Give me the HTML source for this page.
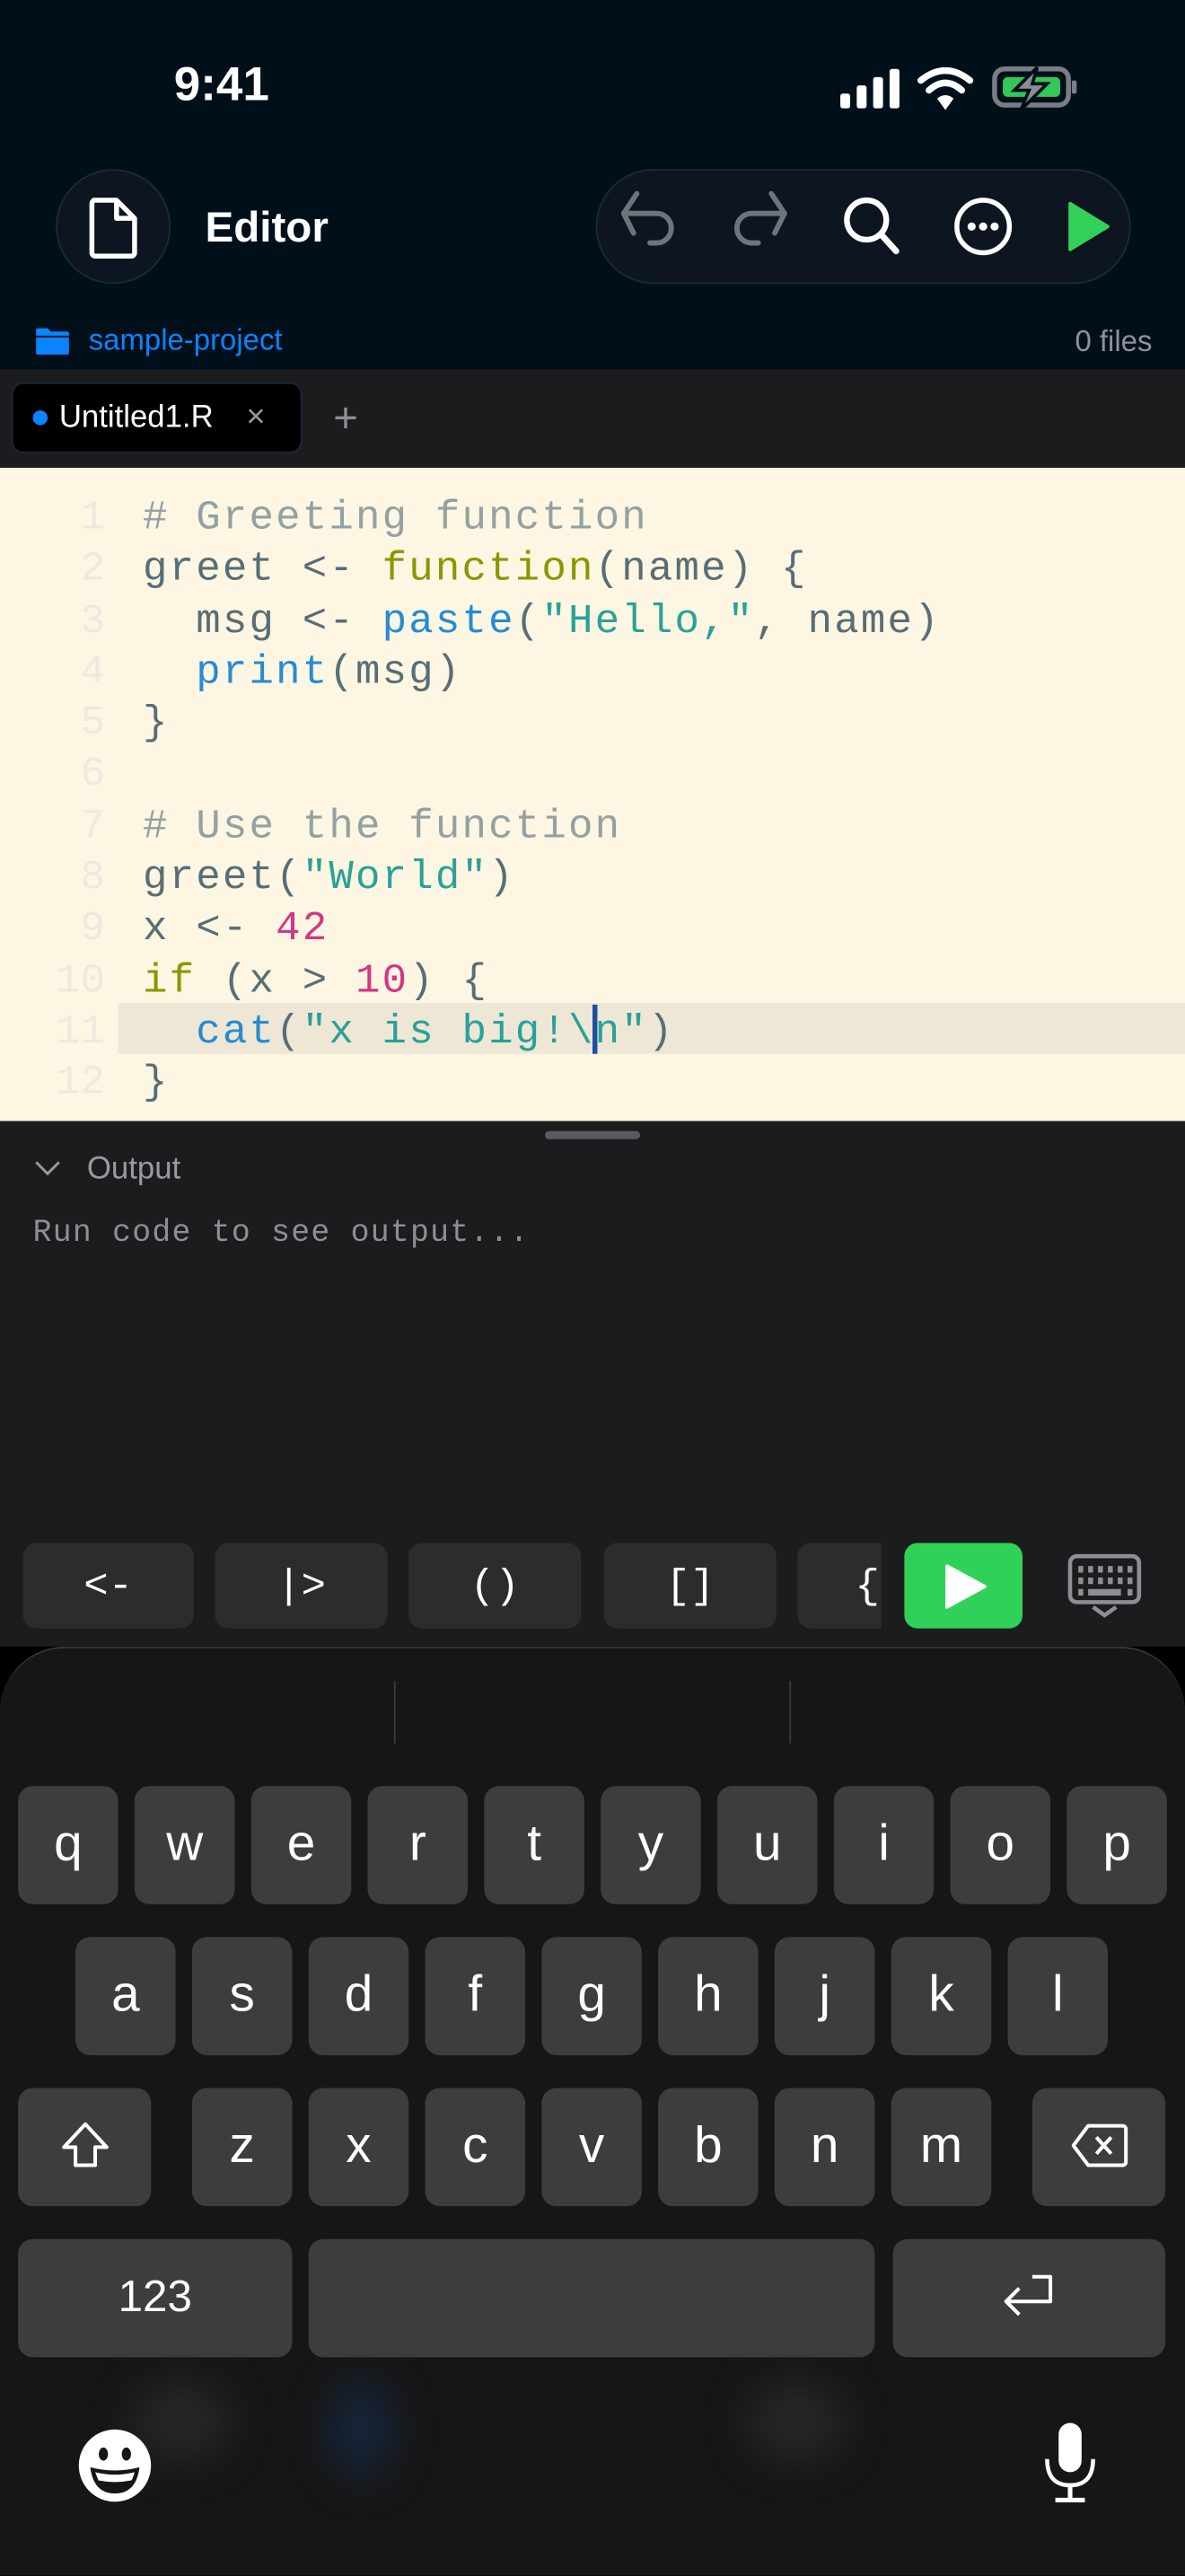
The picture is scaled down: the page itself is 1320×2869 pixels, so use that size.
<!DOCTYPE html>
<html><head><meta charset="utf-8"><style>
*{margin:0;padding:0;box-sizing:border-box}
html,body{width:1320px;height:2868px;overflow:hidden;background:#000}
#r{position:absolute;left:0;top:0;width:722px;height:1569px;transform:scale(1.82825);transform-origin:0 0;font-family:"Liberation Sans",sans-serif;overflow:hidden}
.a{position:absolute}
.code{font-family:"Liberation Mono",monospace;font-size:25px;letter-spacing:1.2px;line-height:31.3px;white-space:pre}
.ln{color:#eee9de;text-align:right;width:64px;left:0;letter-spacing:0}
.c{color:#93a1a1}.d{color:#586e75}.k{color:#859900}.b{color:#268bd2}.s{color:#2aa198}.n{color:#d33682}
.key{position:absolute;background:#3d3d3d;border-radius:9px;color:#fff;font-size:31px;display:flex;align-items:center;justify-content:center;height:72px;width:61px;padding-bottom:2px}
.acc{position:absolute;top:940px;height:52px;background:#2c2c2e;border-radius:8px;color:#fff;font-family:"Liberation Mono",monospace;font-size:25px;display:flex;align-items:center;justify-content:center}
</style></head><body><div id="r">
<!-- header -->
<div class="a" style="left:0;top:0;width:722px;height:225px;background:#00101b"></div>
<div class="a" style="left:106px;top:36px;color:#fff;font-size:29px;font-weight:bold">9:41</div>
<svg class="a" style="left:510px;top:40px" width="150" height="28" viewBox="0 0 150 28">
<rect x="2" y="17" width="6" height="9" rx="1.5" fill="#fff"/><rect x="12" y="12" width="6" height="14" rx="1.5" fill="#fff"/><rect x="22" y="7" width="6" height="19" rx="1.5" fill="#fff"/><rect x="32" y="2" width="6" height="24" rx="1.5" fill="#fff"/>
<path d="M51 9 Q66 -3 81 9" stroke="#fff" stroke-width="4" fill="none" stroke-linecap="round"/><path d="M56 15 Q66 6 76 15" stroke="#fff" stroke-width="4" fill="none" stroke-linecap="round"/><path d="M61 20 L66 27 L71 20 Q66 16 61 20Z" fill="#fff"/>
<rect x="96" y="2" width="45" height="22" rx="6" fill="none" stroke="#7a7e84" stroke-width="3"/><rect x="101" y="7" width="35" height="12" rx="3" fill="#34c759"/><rect x="143" y="9" width="3" height="8" rx="1" fill="#7a7e84"/>
<path d="M122 1 L108 15 L117 15 L112 27 L128 11 L119 11 Z" fill="#8a8e94" stroke="#00101b" stroke-width="2"/>
</svg>
<div class="a" style="left:34px;top:103px;width:70px;height:70px;border-radius:50%;background:#0d1620;border:1px solid #1c2a38"></div>
<svg class="a" style="left:53px;top:120px" width="32" height="38" viewBox="0 0 32 38"><path d="M4 2 H18 L29 13 V34 a2 2 0 0 1 -2 2 H5 a2 2 0 0 1 -2 -2 V4 a2 2 0 0 1 2 -2Z M18 2 V13 H29" fill="none" stroke="#fff" stroke-width="3" stroke-linejoin="round"/></svg>
<div class="a" style="left:125px;top:123px;color:#fff;font-size:26px;font-weight:bold">Editor</div>
<div class="a" style="left:363px;top:103px;width:326px;height:70px;border-radius:35px;background:#0d1620;border:1px solid #1c2a38"></div>
<svg class="a" style="left:370px;top:112px" width="310" height="52" viewBox="0 0 310 52">
<path d="M16 6 L8 18 L14 30 M9 18 H28 a9 9 0 0 1 0 18 H24" fill="none" stroke="#6e747a" stroke-width="3.2" stroke-linecap="round" stroke-linejoin="round" transform="translate(2,0)"/>
<path d="M100 6 L108 18 L102 30 M107 18 H88 a9 9 0 0 0 0 18 H92" fill="none" stroke="#6e747a" stroke-width="3.2" stroke-linecap="round" stroke-linejoin="round"/>
<circle cx="158" cy="22" r="12" fill="none" stroke="#fff" stroke-width="3.5"/><path d="M167 31 L176 41" stroke="#fff" stroke-width="3.8" stroke-linecap="round"/>
<circle cx="229" cy="26" r="16" fill="none" stroke="#fff" stroke-width="3"/><circle cx="222" cy="26" r="2.5" fill="#fff"/><circle cx="229" cy="26" r="2.5" fill="#fff"/><circle cx="236" cy="26" r="2.5" fill="#fff"/>
<path d="M282 12 L282 40 L305 26 Z" fill="#32d15a" stroke="#32d15a" stroke-width="2" stroke-linejoin="round"/>
</svg>
<svg class="a" style="left:21px;top:199px" width="22" height="18" viewBox="0 0 22 18"><path d="M1 2 a1 1 0 0 1 1-1 H8 L10 3 H20 a1 1 0 0 1 1 1 V16 a1 1 0 0 1 -1 1 H2 a1 1 0 0 1 -1 -1Z" fill="#0a84ff"/><path d="M1 6 H21" stroke="#00101b" stroke-width="1"/></svg>
<div class="a" style="left:54px;top:197px;color:#0a84ff;font-size:18px">sample-project</div>
<div class="a" style="right:20px;top:198px;color:#8e9297;font-size:18px">0 files</div>
<!-- tabs -->
<div class="a" style="left:0;top:225px;width:722px;height:60px;background:#1c1c1e"></div>
<div class="a" style="left:7px;top:233px;width:177px;height:43px;background:#000;border-radius:7px;border:1px solid #1a2636"></div>
<div class="a" style="left:20px;top:250px;width:9px;height:9px;border-radius:50%;background:#0a84ff"></div>
<div class="a" style="left:36px;top:244px;color:#fff;font-size:19px">Untitled1.R</div>
<div class="a" style="left:150px;top:243px;color:#9a9a9e;font-size:20px">×</div>
<div class="a" style="left:203px;top:239px;color:#8e8e93;font-size:26px;font-weight:300">+</div>
<!-- editor -->
<div class="a" style="left:0;top:285px;width:722px;height:398px;background:#fdf6e3"></div>
<div class="a" style="left:72px;top:611px;width:650px;height:31px;background:#eee7d6"></div>
<div class="a code ln" style="top:300px">1
2
3
4
5
6
7
8
9
10
11
12</div>
<div class="a code d" style="left:87px;top:300px"><span class="c"># Greeting function</span>
greet &lt;- <span class="k">function</span>(name) {
  msg &lt;- <span class="b">paste</span>(<span class="s">"Hello,"</span>, name)
  <span class="b">print</span>(msg)
}

<span class="c"># Use the function</span>
greet(<span class="s">"World"</span>)
x &lt;- <span class="n">42</span>
<span class="k">if</span> (x &gt; <span class="n">10</span>) {
  <span class="b">cat</span>(<span class="s">"x is big!\n"</span>)
}</div>
<div class="a" style="left:361px;top:612px;width:3px;height:30px;background:#1f4fa0"></div>
<!-- output -->
<div class="a" style="left:0;top:683px;width:722px;height:320px;background:#1c1c1e"></div>
<div class="a" style="left:332px;top:689px;width:58px;height:5px;border-radius:3px;background:#5a5a5e"></div>
<svg class="a" style="left:20px;top:706px" width="18" height="12" viewBox="0 0 18 12"><path d="M2 2 L9 9 L16 2" fill="none" stroke="#9a9a9e" stroke-width="1.6"/></svg>
<div class="a" style="left:53px;top:702px;color:#9a9a9e;font-size:19px">Output</div>
<div class="a" style="left:20px;top:740px;color:#8e8e93;font-family:'Liberation Mono',monospace;font-size:19px;letter-spacing:0.7px">Run code to see output...</div>
<!-- accessory -->
<div class="acc" style="left:14px;width:104px">&lt;-</div>
<div class="acc" style="left:131px;width:105px">|&gt;</div>
<div class="acc" style="left:249px;width:105px">()</div>
<div class="acc" style="left:368px;width:105px">[]</div>
<div class="acc" style="left:486px;width:51px;border-radius:8px 0 0 8px;justify-content:flex-end;padding-right:1px">{</div>
<div class="a" style="left:551px;top:940px;width:72px;height:52px;background:#30d158;border-radius:8px"></div>
<svg class="a" style="left:574px;top:952px" width="30" height="30" viewBox="0 0 30 30"><path d="M3 2 L3 27 L26 14.5 Z" fill="#fff" stroke="#fff" stroke-width="2" stroke-linejoin="round"/></svg>
<svg class="a" style="left:650px;top:946px" width="46" height="40" viewBox="0 0 46 40"><rect x="2" y="2" width="42" height="28" rx="4" fill="none" stroke="#8e8e93" stroke-width="2.5"/><g fill="#8e8e93"><rect x="7" y="8" width="3" height="4"/><rect x="13" y="8" width="3" height="4"/><rect x="19" y="8" width="3" height="4"/><rect x="25" y="8" width="3" height="4"/><rect x="31" y="8" width="3" height="4"/><rect x="37" y="8" width="3" height="4"/><rect x="7" y="15" width="3" height="4"/><rect x="13" y="15" width="3" height="4"/><rect x="19" y="15" width="3" height="4"/><rect x="25" y="15" width="3" height="4"/><rect x="31" y="15" width="3" height="4"/><rect x="37" y="15" width="3" height="4"/><rect x="7" y="22" width="3" height="4"/><rect x="13" y="22" width="20" height="4"/><rect x="37" y="22" width="3" height="4"/></g><path d="M16 33 L23 38 L30 33" fill="none" stroke="#8e8e93" stroke-width="2.5"/></svg>
<!-- keyboard -->
<div class="a" style="left:0;top:1003px;width:722px;height:566px;background:#161616;border-radius:40px 40px 0 0;border-top:1.5px solid #3a3a3a"></div>
<div class="a" style="left:240px;top:1024px;width:1px;height:38px;background:#3a3a3a"></div>
<div class="a" style="left:481px;top:1024px;width:1px;height:38px;background:#3a3a3a"></div>
<div class="key" style="left:11px;top:1088px">q</div><div class="key" style="left:82px;top:1088px">w</div><div class="key" style="left:153px;top:1088px">e</div><div class="key" style="left:224px;top:1088px">r</div><div class="key" style="left:295px;top:1088px">t</div><div class="key" style="left:366px;top:1088px">y</div><div class="key" style="left:437px;top:1088px">u</div><div class="key" style="left:508px;top:1088px">i</div><div class="key" style="left:579px;top:1088px">o</div><div class="key" style="left:650px;top:1088px">p</div>
<div class="key" style="left:46px;top:1180px">a</div><div class="key" style="left:117px;top:1180px">s</div><div class="key" style="left:188px;top:1180px">d</div><div class="key" style="left:259px;top:1180px">f</div><div class="key" style="left:330px;top:1180px">g</div><div class="key" style="left:401px;top:1180px">h</div><div class="key" style="left:472px;top:1180px">j</div><div class="key" style="left:543px;top:1180px">k</div><div class="key" style="left:614px;top:1180px">l</div>
<div class="key" style="left:11px;top:1272px;width:81px"><svg width="32" height="32" viewBox="0 0 32 32"><path d="M16 3 L29 17 H22 V28 H10 V17 H3 Z" fill="none" stroke="#fff" stroke-width="2.2" stroke-linejoin="round"/></svg></div>
<div class="key" style="left:117px;top:1272px">z</div><div class="key" style="left:188px;top:1272px">x</div><div class="key" style="left:259px;top:1272px">c</div><div class="key" style="left:330px;top:1272px">v</div><div class="key" style="left:401px;top:1272px">b</div><div class="key" style="left:472px;top:1272px">n</div><div class="key" style="left:543px;top:1272px">m</div>
<div class="key" style="left:629px;top:1272px;width:81px"><svg width="36" height="28" viewBox="0 0 36 28"><path d="M11 2 H32 a2 2 0 0 1 2 2 V24 a2 2 0 0 1 -2 2 H11 L2 14 Z" fill="none" stroke="#fff" stroke-width="2.2" stroke-linejoin="round"/><path d="M16 9 L25 19 M25 9 L16 19" stroke="#fff" stroke-width="2.2"/></svg></div>
<div class="key" style="left:11px;top:1364px;width:167px;font-size:27px">123</div>
<div class="key" style="left:188px;top:1364px;width:345px"></div>
<div class="key" style="left:544px;top:1364px;width:166px"><svg width="36" height="30" viewBox="0 0 36 30"><path d="M20 3 H31 V18 H5 M12 10 L4 18 L12 26" fill="none" stroke="#fff" stroke-width="2.2" stroke-linejoin="round"/></svg></div>
<div class="a" style="left:80px;top:1450px;width:60px;height:50px;border-radius:50%;background:#262626;filter:blur(12px)"></div>
<div class="a" style="left:200px;top:1450px;width:40px;height:60px;border-radius:50%;background:#17243a;filter:blur(12px)"></div>
<div class="a" style="left:455px;top:1450px;width:60px;height:50px;border-radius:50%;background:#262626;filter:blur(12px)"></div>
<svg class="a" style="left:47px;top:1479px" width="46" height="46" viewBox="0 0 46 46"><circle cx="23" cy="23" r="22" fill="#fff"/><ellipse cx="16" cy="16" rx="2.8" ry="4" fill="#161616"/><ellipse cx="30" cy="16" rx="2.8" ry="4" fill="#161616"/><path d="M8 24 Q23 28 38 24 Q36 40 23 40 Q10 40 8 24Z" fill="#161616"/><path d="M11 27 Q23 30 35 27 Q34 31 33 32 Q23 34 13 32 Z" fill="#fff"/></svg>
<svg class="a" style="left:634px;top:1474px" width="36" height="54" viewBox="0 0 36 54"><rect x="11" y="2" width="14" height="30" rx="7" fill="#fff"/><path d="M4 24 Q4 40 18 40 Q32 40 32 24" fill="none" stroke="#fff" stroke-width="2.5"/><path d="M18 40 V49 M9 49 H27" stroke="#fff" stroke-width="2.8"/></svg>
</div></body></html>
